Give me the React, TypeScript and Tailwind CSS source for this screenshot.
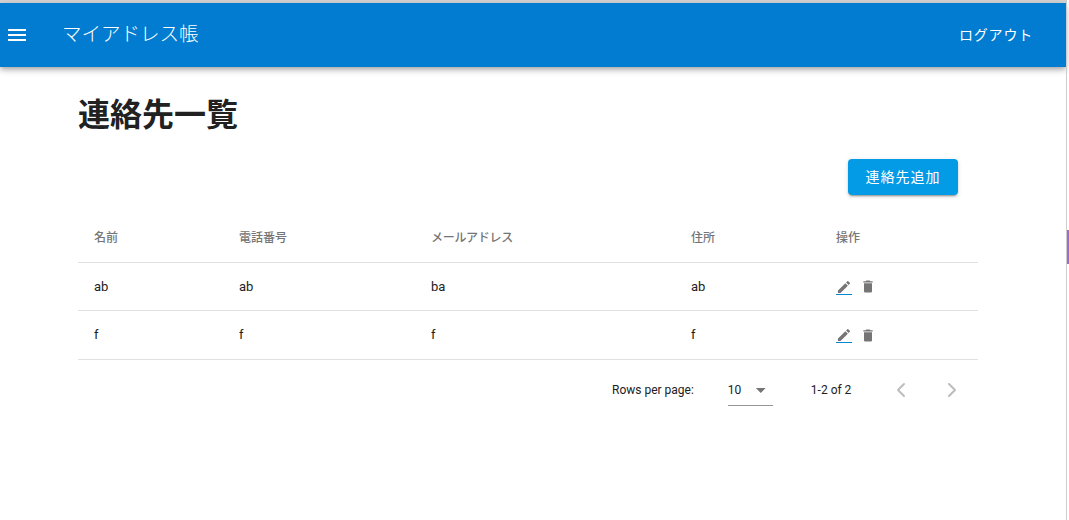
import { ChevronLeft, ChevronRight } from "lucide-react";

const rows = [
  ["ab", "ab", "ba", "ab"],
  ["f", "f", "f", "f"],
];

function EditIcon() {
  return (
    <svg className="block translate-y-px" width="16" height="16" viewBox="0 0 24 24" fill="#757575">
      <path d="M3 17.25V21h3.75L17.81 9.94l-3.75-3.75L3 17.25zM20.71 7.04a1 1 0 0 0 0-1.41l-2.34-2.34a1 1 0 0 0-1.41 0l-1.83 1.83 3.75 3.75 1.83-1.83z" />
    </svg>
  );
}

function TrashIcon() {
  return (
    <svg className="block translate-y-[0.5px]" width="16" height="16" viewBox="0 0 24 24" fill="#757575">
      <path d="M6 19c0 1.1.9 2 2 2h8c1.1 0 2-.9 2-2V7H6v12zM19 4h-3.5l-1-1h-5l-1 1H5v2h14V4z" />
    </svg>
  );
}

export default function App() {
  return (
    <div className="flex h-[520px] w-[1069px] overflow-hidden bg-white font-['Roboto','Noto_Sans_CJK_JP',sans-serif] text-[#212121]">
      <div className="flex w-[1066px] flex-col border-t-[3px] border-[#d4d4d4]">
        <header className="flex h-[64px] shrink-0 items-center bg-[#017cd0] text-white shadow-[0_2px_4px_-1px_rgba(0,0,0,0.2),0_4px_5px_0_rgba(0,0,0,0.14),0_1px_10px_0_rgba(0,0,0,0.12)]">
          <svg className="ml-[5px]" width="24" height="24" viewBox="0 0 24 24" fill="white">
            <path d="M3 18h18v-2H3v2zm0-5h18v-2H3v2zm0-7v2h18V6H3z" />
          </svg>
          <div className="ml-[33px] text-[19.5px] font-light leading-none">マイアドレス帳</div>
          <div className="ml-auto mr-[33px] text-[14px] leading-none tracking-[0.8px]">ログアウト</div>
        </header>
        <main className="ml-[78px] w-[900px]">
          <h1 className="mt-[28px] h-[40px] text-[32px] font-semibold leading-[40px]">連絡先一覧</h1>
          <div className="mt-[24px] flex justify-end pr-[20px]">
            <button className="flex h-[36px] w-[110px] items-center justify-center rounded-[4px] bg-[#039be5] text-[14px] tracking-[1px] text-white shadow-[0_3px_1px_-2px_rgba(0,0,0,0.2),0_2px_2px_0_rgba(0,0,0,0.14),0_1px_5px_0_rgba(0,0,0,0.12)]">
              連絡先追加
            </button>
          </div>
          <table className="mt-[19px] w-[900px] table-fixed border-collapse text-[13px]">
            <colgroup>
              <col className="w-[145px]" />
              <col className="w-[192px]" />
              <col className="w-[260px]" />
              <col className="w-[145px]" />
              <col className="w-[158px]" />
            </colgroup>
            <thead>
              <tr className="h-[48px] border-b border-[#e0e0e0] text-left text-[12px] text-[#757575]">
                <th className="pl-4 font-medium">名前</th>
                <th className="pl-4 font-medium">電話番号</th>
                <th className="pl-4 font-medium tracking-[-0.3px]">メールアドレス</th>
                <th className="pl-4 font-medium">住所</th>
                <th className="pl-4 font-medium">操作</th>
              </tr>
            </thead>
            <tbody>
              {rows.map((r, i) => (
                <tr key={i} className="h-[48.5px] border-b border-[#e0e0e0]">
                  {r.map((c, j) => (
                    <td key={j} className="pl-4">{c}</td>
                  ))}
                  <td className="pl-4">
                    <div className="flex items-center gap-[8px]">
                      <span className="h-[17px] border-b border-[#0288d1]"><EditIcon /></span>
                      <span><TrashIcon /></span>
                    </div>
                  </td>
                </tr>
              ))}
            </tbody>
          </table>
          <div className="flex h-[60px] items-center text-[12px]">
            <span className="ml-[534px]">Rows per page:</span>
            <div className="ml-[34px] flex h-[33px] w-[45px] items-center border-b border-[#949494] pt-[2px]">
              <span>10</span>
              <svg className="ml-[8px]" width="24" height="24" viewBox="0 0 24 24" fill="#757575"><path d="M7 10l5 5 5-5z" /></svg>
            </div>
            <span className="ml-[38px]">1-2 of 2</span>
            <ChevronLeft className="ml-[38px]" size={24} color="#bdbdbd" strokeWidth={2} />
            <ChevronRight className="ml-[27px]" size={24} color="#bdbdbd" strokeWidth={2} />
          </div>
        </main>
      </div>
      <div className="relative w-[3px] border-l border-[#cccccc]">
        <div className="absolute left-0 top-[230px] h-[34px] w-[2px] bg-[#9b6dd1]" />
      </div>
    </div>
  );
}
